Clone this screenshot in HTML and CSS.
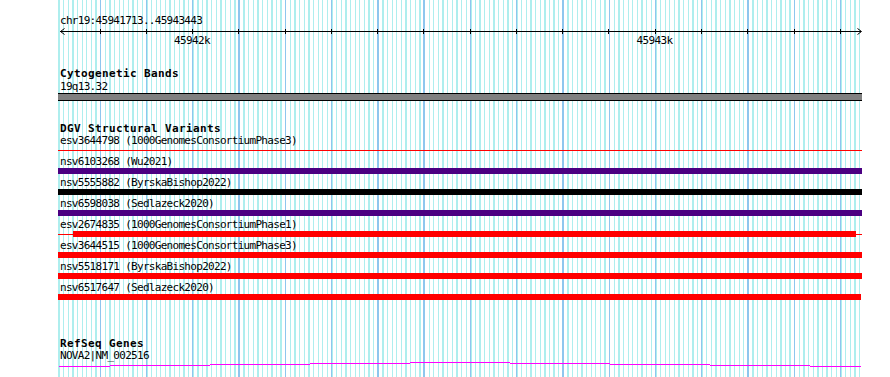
FILE: index.html
```html
<!DOCTYPE html>
<html lang="en">
<head>
    <meta charset="UTF-8">
    <meta name="viewport" content="width=device-width, initial-scale=1.0">
    <title>chr19:45941713..45943443</title>
    <link rel="stylesheet" href="styles.css">
</head>
<body>
    <div class="browser">
        <!-- Ruler -->
        <div class="ruler">
            <div class="locus">chr19:45941713..45943443</div>
            <svg class="scale" width="804" height="20" viewBox="0 0 804 20">
                <line x1="2" y1="3.5" x2="803" y2="3.5" stroke="#000" />
                <polyline points="6.5,0.5 2.5,3.5 6.5,6.5" fill="none" stroke="#000" />
                <polyline points="799.5,0.5 803.5,3.5 799.5,6.5" fill="none" stroke="#000" />
                <path d="M42.5 1V6M88.5 1V6M134.5 1V6M180.5 1V6M227.5 1V6M273.5 1V6M319.5 1V6M365.5 1V6M412.5 1V6M458.5 1V6M504.5 1V6M550.5 1V6M597.5 1V6M643.5 1V6M689.5 1V6M736.5 1V6M782.5 1V6" stroke="#000" />
                <text class="scale-label" x="134" y="16" text-anchor="middle">45942k</text>
                <text class="scale-label" x="596.5" y="16" text-anchor="middle">45943k</text>
            </svg>
        </div>

        <!-- Cytogenetic Bands -->
        <section class="track cyto">
            <h3 class="track-title">Cytogenetic Bands</h3>
            <div class="feature-label">19q13.32</div>
            <div class="band"></div>
        </section>

        <!-- DGV Structural Variants -->
        <section class="track dgv">
            <h3 class="track-title">DGV Structural Variants</h3>

            <div class="sv-row">
                <div class="feature-label">esv3644798 (1000GenomesConsortiumPhase3)</div>
                <div class="sv-bar"><span class="sv-line red fill"></span></div>
            </div>
            <div class="sv-row">
                <div class="feature-label">nsv6103268 (Wu2021)</div>
                <div class="sv-bar"><span class="sv-block purple fill"></span></div>
            </div>
            <div class="sv-row">
                <div class="feature-label">nsv5555882 (ByrskaBishop2022)</div>
                <div class="sv-bar"><span class="sv-block black fill"></span></div>
            </div>
            <div class="sv-row">
                <div class="feature-label">nsv6598038 (Sedlazeck2020)</div>
                <div class="sv-bar"><span class="sv-block purple fill"></span></div>
            </div>
            <div class="sv-row">
                <div class="feature-label">esv2674835 (1000GenomesConsortiumPhase1)</div>
                <div class="sv-bar">
                    <span class="sv-line red" style="width: 15px"></span>
                    <span class="sv-block red" style="width: 783px"></span>
                    <span class="sv-line red fill"></span>
                </div>
            </div>
            <div class="sv-row">
                <div class="feature-label">esv3644515 (1000GenomesConsortiumPhase3)</div>
                <div class="sv-bar"><span class="sv-block red fill"></span></div>
            </div>
            <div class="sv-row">
                <div class="feature-label">nsv5518171 (ByrskaBishop2022)</div>
                <div class="sv-bar"><span class="sv-block red fill"></span></div>
            </div>
            <div class="sv-row">
                <div class="feature-label">nsv6517647 (Sedlazeck2020)</div>
                <div class="sv-bar"><span class="sv-block red" style="width: 803px"></span></div>
            </div>
        </section>

        <!-- RefSeq Genes -->
        <section class="track refseq">
            <h3 class="track-title">RefSeq Genes</h3>
            <div class="feature-label">NOVA2|NM_002516</div>
            <svg class="gene" width="804" height="8" viewBox="0 0 804 8" shape-rendering="crispEdges">
                <g fill="#ff00ff">
                    <rect x="1" y="4" width="51" height="1" />
                    <rect x="52" y="3" width="100" height="1" />
                    <rect x="152" y="2" width="100" height="1" />
                    <rect x="252" y="1" width="100" height="1" />
                    <rect x="352" y="0" width="100" height="1" />
                    <rect x="452" y="1" width="100" height="1" />
                    <rect x="552" y="2" width="100" height="1" />
                    <rect x="652" y="3" width="100" height="1" />
                    <rect x="752" y="4" width="51" height="1" />
                </g>
            </svg>
        </section>
    </div>
</body>
</html>
```

FILE: styles.css
```css
body {
    margin: 0;
    padding: 0;
    background-color: #fff;
    font-family: "DejaVu Sans Mono", monospace;
    color: #000;
}

.browser {
    width: 804px;
    height: 377px;
    margin-left: 58px;
    padding-top: 15px;
    box-sizing: border-box;
    overflow: hidden;
    background-image:
        repeating-linear-gradient(90deg, transparent 0 41.6px, #8ec6ee 41.6px 42.9px, transparent 42.9px 46.27px),
        repeating-linear-gradient(90deg, transparent 0 0.4px, #aeeeee 0.4px 1.7px, transparent 1.7px 4.627px);
    background-size: 802px 100%;
    background-repeat: no-repeat;
}

.locus,
.feature-label {
    font-size: 11px;
    line-height: 12px;
    letter-spacing: -0.7px;
    padding-left: 2px;
    white-space: nowrap;
}

.locus {
    margin-bottom: 1px;
}

.scale {
    display: block;
}

.scale-label {
    font-family: "DejaVu Sans Mono", monospace;
    font-size: 11px;
    letter-spacing: -0.65px;
    fill: #000;
}

.track-title {
    margin: 0;
    padding-left: 2px;
    font-size: 11px;
    line-height: 12px;
    font-weight: bold;
    letter-spacing: 0.38px;
}

.cyto {
    margin-top: 20px;
}

.cyto .feature-label {
    margin-top: 1px;
}

.band {
    height: 6px;
    background-color: #808080;
    border-top: 1px solid #000;
    border-bottom: 1px solid #000;
}

.dgv {
    margin-top: 22px;
}

.sv-row {
    height: 21px;
}

.sv-bar {
    display: flex;
    align-items: center;
    height: 6px;
}

.sv-line {
    height: 1px;
}

.sv-block {
    height: 6px;
}

.fill {
    flex: 1;
}

.red { background-color: #ff0000; }
.purple { background-color: #4b0082; }
.black { background-color: #000; }

.refseq {
    margin-top: 35px;
}

.gene {
    display: block;
}
```
